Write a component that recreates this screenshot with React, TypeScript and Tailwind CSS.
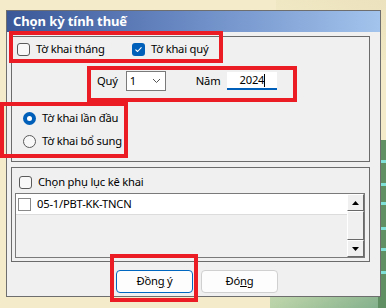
import React from "react";

const font = { fontFamily: '"Noto Sans", "Open Sans", sans-serif' };

function Check({ checked }: { checked?: boolean }) {
  return checked ? (
    <div className="w-[13px] h-[13px] rounded-[3px] bg-[#005fb8] flex items-center justify-center shrink-0">
      <svg width="9" height="9" viewBox="0 0 9 9">
        <path d="M1.8 4.8 L3.6 6.5 L7.2 2.6" stroke="white" strokeWidth="1.1" fill="none" strokeLinecap="round" strokeLinejoin="round" />
      </svg>
    </div>
  ) : (
    <div className="w-[13px] h-[13px] rounded-[3px] border border-[#5a5a5a] bg-[#f8f8f8] shrink-0" />
  );
}

function Radio({ checked }: { checked?: boolean }) {
  return checked ? (
    <div className="w-[13px] h-[13px] rounded-full bg-[#005fb8] flex items-center justify-center shrink-0">
      <div className="w-[5px] h-[5px] rounded-full bg-white" />
    </div>
  ) : (
    <div className="w-[13px] h-[13px] rounded-full border border-[#5a5a5a] bg-[#f8f8f8] shrink-0" />
  );
}

export default function App() {
  return (
    <div
      className="relative w-[386px] h-[308px] overflow-hidden bg-[#f3ebc9] text-[11.2px] tracking-[-0.2px] text-black"
      style={font}
    >
      {/* background decoration */}
      <div className="absolute right-0 top-0 w-[110px] h-[60px] bg-gradient-to-bl from-[#ece2bd] to-transparent" />
      <div className="absolute left-[270px] top-[240px] w-[116px] h-[68px] bg-gradient-to-br from-[#dfe6c4] via-[#b9d2a8] to-[#7fae8a]" />
      <div className="absolute left-[378px] top-[140px] w-[8px] h-[168px] bg-[#5f8f63]">
        <div className="mt-[20px] h-[3px] bg-[#7fe0d8]" />
        <div className="mt-[20px] h-[3px] bg-[#7fe0d8]" />
        <div className="mt-[16px] h-[3px] bg-[#7fe0d8]" />
        <div className="mt-[22px] h-[3px] bg-[#7fe0d8]" />
        <div className="mt-[18px] h-[3px] bg-[#7fe0d8]" />
        <div className="mt-[20px] h-[3px] bg-[#7fe0d8]" />
      </div>

      <div className="relative pl-[6px] pt-[10px]">
        <div className="w-[375px] h-[287px] border border-[#6e6e6e] bg-[#f0f0f0] flex flex-col">
          {/* title */}
          <div className="h-[21px] shrink-0 bg-gradient-to-r from-[#3a5797] via-[#6c8cc6] to-[#a3c4ec] flex items-center pl-[6px]">
            <span className="text-white font-bold text-[13px] leading-none tracking-[-0.1px]">Chọn kỳ tính thuế</span>
          </div>

          <div className="flex flex-col px-[4px] pt-[4px]">
            {/* group 1 */}
            <div className="w-[359px] h-[126px] border border-[#6b6b6b] flex flex-col">
              <div className="flex items-center pl-[5px] pt-[5px] h-[19px]">
                <Check />
                <span className="ml-[6px] w-[96px]">Tờ khai tháng</span>
                <Check checked />
                <span className="ml-[6px]">Tờ khai quý</span>
              </div>
              <div className="flex items-center mt-[15px] h-[20px] pl-[85px]">
                <span>Quý</span>
                <div className="ml-[8px] w-[40px] h-[20px] bg-white border border-[#7a7a7a] flex items-center pl-[3px] pr-[4px] justify-between">
                  <span>1</span>
                  <svg width="9" height="6" viewBox="0 0 9 6">
                    <path d="M1 1 L4.5 4.5 L8 1" stroke="#555" strokeWidth="1" fill="none" />
                  </svg>
                </div>
                <span className="ml-[30px]">Năm</span>
                <div className="ml-[7px] w-[50px] h-[18px] bg-white border-b-2 border-[#005fb8] flex items-center justify-center">
                  <span>2024</span>
                  <span className="w-px h-[13px] bg-black" />
                </div>
              </div>
              <div className="flex flex-col pl-[11px] mt-[21px] gap-[10px]">
                <div className="flex items-center h-[13px]">
                  <Radio checked />
                  <span className="ml-[6px]">Tờ khai lần đầu</span>
                </div>
                <div className="flex items-center h-[13px]">
                  <Radio />
                  <span className="ml-[6px]">Tờ khai bổ sung</span>
                </div>
              </div>
            </div>

            {/* group 2 */}
            <div className="mt-[5px] w-[359px] h-[95px] border border-[#6b6b6b] flex flex-col pl-[3px]">
              <div className="flex items-center h-[13px] mt-[8px] pl-[4px]">
                <Check />
                <span className="ml-[6px]">Chọn phụ lục kê khai</span>
              </div>
              <div className="mt-[4px] w-[350px] h-[65px] border border-[#7a7a7a] bg-[#f0f0f0] flex">
                <div className="flex-1 flex flex-col">
                  <div className="h-[21px] bg-white border-b border-[#dcdcdc] flex items-center pl-[2px]">
                    <div className="w-[13px] h-[13px] border border-[#8a8a8a] bg-white" />
                    <span className="ml-[6px]">05-1/PBT-KK-TNCN</span>
                  </div>
                </div>
                <div className="w-[17px] flex flex-col bg-[#f0f0f0]">
                  <div className="h-[17px] border border-t-white border-l-white border-r-[#696969] border-b-[#696969] flex items-center justify-center">
                    <svg width="7" height="4" viewBox="0 0 7 4"><path d="M0 4 L3.5 0 L7 4 Z" fill="black" /></svg>
                  </div>
                  <div className="flex-1 border border-t-white border-l-white border-r-[#696969] border-b-[#696969]" />
                  <div className="h-[17px] border border-t-white border-l-white border-r-[#696969] border-b-[#696969] flex items-center justify-center">
                    <svg width="7" height="4" viewBox="0 0 7 4"><path d="M0 0 L7 0 L3.5 4 Z" fill="black" /></svg>
                  </div>
                </div>
              </div>
            </div>

            {/* buttons */}
            <div className="flex mt-[8px] pl-[105px] gap-[8px]">
              <div className="w-[77px] h-[23px] rounded-[4px] border border-[#0067c0] bg-[#fdfdfd] flex items-center justify-center">
                <span>Đồn<span className="underline">g</span> ý</span>
              </div>
              <div className="w-[77px] h-[23px] rounded-[4px] border border-[#d0d0d0] bg-[#fdfdfd] flex items-center justify-center">
                <span>Đó<span className="underline">n</span>g</span>
              </div>
            </div>
          </div>
        </div>
      </div>

      {/* red annotation boxes */}
      <div className="absolute left-[9px] top-[31px] w-[214px] h-[32px] border-4 border-[#ec1c24]" />
      <div className="absolute left-[87px] top-[66px] w-[210px] h-[36px] border-4 border-[#ec1c24]" />
      <div className="absolute left-0 top-[102px] w-[128px] h-[56px] border-4 border-[#ec1c24]" />
      <div className="absolute left-[110px] top-[254px] w-[88px] h-[48px] border-4 border-[#ec1c24]" />
    </div>
  );
}
